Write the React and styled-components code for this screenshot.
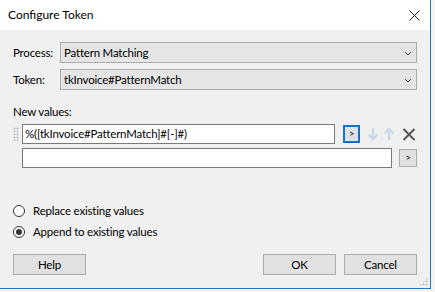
import React from 'react'
import styled, { createGlobalStyle } from 'styled-components';

const GlobalStyle = createGlobalStyle`
    body {
        margin: 0;
        background: #f4f4f4;
        font-family: Lato, "Open Sans", sans-serif;
        line-height: 16px;
    }
`;

const Window = styled.div`
    width: 430px;
    height: 288px;
    background: #f0f0f0;
    border-right: 1px solid #1c7ad6;
    border-bottom: 1px solid #1c7ad6;
    display: flex;
    flex-direction: column;
    position: relative;
`;

const TitleBar = styled.div`
    height: 30px;
    background: #fff;
    display: flex;
    align-items: center;
    justify-content: space-between;
    padding: 0 10px 0 8px;
    font-size: 12px;
    color: #000;
`;

const Body = styled.div`
    padding: 12px 13px 0 13px;
    display: flex;
    flex-direction: column;
    font-size: 11.5px;
    letter-spacing: -0.2px;
    color: #000;
`;

const FieldRow = styled.div`
    display: grid;
    grid-template-columns: 47px 1fr;
    align-items: center;
    margin-bottom: 6px;
`;

const Select = styled.div`
    height: 19px;
    border: 1px solid #adadad;
    background: #e5e5e5;
    display: flex;
    align-items: center;
    justify-content: space-between;
    padding: 0 4px 0 3px;
    svg { margin-top: 1px; }
`;

const SectionLabel = styled.div`
    padding: 8px 0 4px;
`;

const ValueRow = styled.div`
    display: flex;
    align-items: center;
    margin-bottom: 4px;
    padding-left: ${p => p.grip ? 0 : 9}px;
`;

const Grip = styled.div`
    width: 6px;
    height: 14px;
    margin-right: 3px;
    background-image: radial-gradient(circle, #b8b8b8 0.9px, transparent 1.1px);
    background-size: 3px 3px;
`;

const TextBox = styled.div`
    flex: 1;
    height: 18px;
    border: 1px solid #7a7a7a;
    background: #fff;
    padding: 0 2px;
    display: flex;
    align-items: center;
    white-space: nowrap;
`;

const ArrowButton = styled.div`
    width: ${p => p.focused ? 13 : 16}px;
    height: ${p => p.focused ? 14 : 16}px;
    margin-left: ${p => p.focused ? 8 : 7}px;
    border: ${p => p.focused ? '2px solid #1672c7' : '1px solid #adadad'};
    background: #e1e1e1;
    display: flex;
    align-items: center;
    justify-content: center;
    font-size: 9px;
    ${p => p.focused && 'outline: 1px solid #d7e7f7; outline-offset: -3px;'}
`;

const RowIcon = styled.svg`
    margin-left: ${p => p.gap}px;
    flex-shrink: 0;
`;

const Radios = styled.div`
    margin-top: 32px;
    display: flex;
    flex-direction: column;
    gap: 8px;
`;

const RadioRow = styled.div`
    display: flex;
    align-items: center;
    gap: 8px;
    height: 13px;
`;

const RadioCircle = styled.div`
    width: 10px;
    height: 10px;
    border-radius: 50%;
    border: 1px solid #333;
    background: #fff;
    display: flex;
    align-items: center;
    justify-content: center;
    &::after {
        content: '';
        width: 6px;
        height: 6px;
        border-radius: 50%;
        background: ${p => p.checked ? '#333' : 'transparent'};
    }
`;

const ButtonBar = styled.div`
    margin-top: 16px;
    display: flex;
    align-items: center;
`;

const Button = styled.div`
    width: 71px;
    height: 19px;
    border: 1px solid #adadad;
    background: #e1e1e1;
    display: flex;
    align-items: center;
    justify-content: center;
    margin-left: ${p => p.push ? 'auto' : p.gap ? '8px' : 0};
`;

const ResizeGrip = styled.div`
    position: absolute;
    right: 2px;
    bottom: 2px;
    width: 9px;
    height: 9px;
    background-image: radial-gradient(circle, #bcbcbc 0.9px, transparent 1.1px);
    background-size: 3px 3px;
    clip-path: polygon(100% 0, 100% 100%, 0 100%);
`;

const Chevron = () => (
    <svg width="8" height="5" viewBox="0 0 8 5">
        <path d="M1 1 L4 4 L7 1" fill="none" stroke="#444" strokeWidth="1" />
    </svg>
);

const App = () => {
  return (
    <>
        <GlobalStyle />
        <Window>
            <TitleBar>
                <span>Configure Token</span>
                <svg width="11" height="11" viewBox="0 0 11 11">
                    <path d="M0.5 0.5 L10.5 10.5 M10.5 0.5 L0.5 10.5" stroke="#111" strokeWidth="1" />
                </svg>
            </TitleBar>
            <Body>
                <FieldRow>
                    <span>Process:</span>
                    <Select><span>Pattern Matching</span><Chevron /></Select>
                </FieldRow>
                <FieldRow>
                    <span>Token:</span>
                    <Select><span>tkInvoice#PatternMatch</span><Chevron /></Select>
                </FieldRow>
                <SectionLabel>New values:</SectionLabel>
                <ValueRow grip>
                    <Grip />
                    <TextBox>%([tkInvoice#PatternMatch]#[-]#)</TextBox>
                    <ArrowButton focused>&gt;</ArrowButton>
                    <RowIcon gap={7} width="12" height="14" viewBox="0 0 12 14">
                        <path d="M6 1 V12 M1.5 7.5 L6 12 L10.5 7.5" fill="none" stroke="#c9d8e8" strokeWidth="2.4" />
                    </RowIcon>
                    <RowIcon gap={4} width="12" height="14" viewBox="0 0 12 14">
                        <path d="M6 13 V2 M1.5 6.5 L6 2 L10.5 6.5" fill="none" stroke="#c9d8e8" strokeWidth="2.4" />
                    </RowIcon>
                    <RowIcon gap={7} width="14" height="13" viewBox="0 0 14 13" style={{ marginRight: 1 }}>
                        <path d="M1.5 1 L12.5 12 M12.5 1 L1.5 12" stroke="#555" strokeWidth="2" />
                    </RowIcon>
                </ValueRow>
                <ValueRow>
                    <TextBox />
                    <ArrowButton>&gt;</ArrowButton>
                </ValueRow>
                <Radios>
                    <RadioRow><RadioCircle /><span>Replace existing values</span></RadioRow>
                    <RadioRow><RadioCircle checked /><span>Append to existing values</span></RadioRow>
                </Radios>
                <ButtonBar>
                    <Button>Help</Button>
                    <Button push>OK</Button>
                    <Button gap>Cancel</Button>
                </ButtonBar>
            </Body>
            <ResizeGrip />
        </Window>
    </>
  )
}

export default App
